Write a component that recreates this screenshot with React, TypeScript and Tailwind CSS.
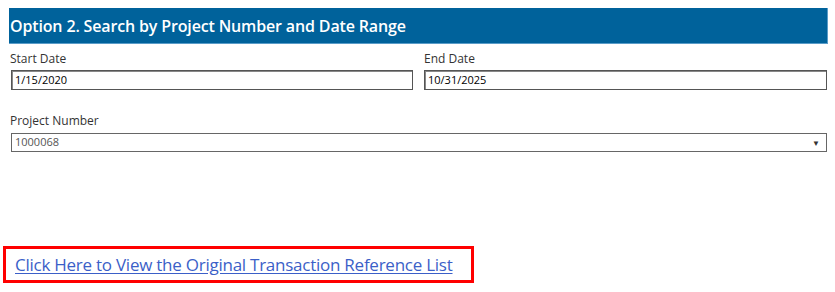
import React from "react";

export default function App() {
  const font = { fontFamily: '"Open Sans", "Noto Sans", Arial, sans-serif' };
  return (
    <div className="w-[835px] h-[292px] bg-white relative overflow-hidden" style={font}>
      <div className="pt-[8px] pl-[9px] pr-[7px]">
        <div className="h-[36px] bg-[#00629b] border-r border-b border-[#5a9cc8] flex items-center pl-[1px]">
          <span className="text-white text-[16px] font-semibold tracking-[-0.15px]">
            Option 2. Search by Project Number and Date Range
          </span>
        </div>
      </div>
      <div className="flex gap-[11px] pl-[10px] pr-[8px] mt-[7px]">
        <div className="flex-1 flex flex-col">
          <span className="text-[12px] text-[#333] leading-[16px]">Start Date</span>
          <div className="mt-[3px] ml-[1px] h-[20px] border border-[#555] shadow-[inset_1px_1px_0_#888] flex items-center pl-[3px] text-[11px] text-black">
            1/15/2020
          </div>
        </div>
        <div className="flex-1 flex flex-col">
          <span className="text-[12px] text-[#333] leading-[16px]">End Date</span>
          <div className="mt-[3px] h-[20px] border border-[#555] shadow-[inset_1px_1px_0_#888] flex items-center pl-[3px] text-[11px] text-black">
            10/31/2025
          </div>
        </div>
      </div>
      <div className="pl-[10px] pr-[8px] mt-[23px] flex flex-col">
        <span className="text-[12px] text-[#333] leading-[16px]">Project Number</span>
        <div className="mt-[4px] ml-[1px] h-[19px] border border-[#666] flex items-center justify-between pl-[3px] pr-[6px] text-[11px] text-[#555]">
          <span>1000068</span>
          <span className="text-[8px] text-[#333]">▼</span>
        </div>
      </div>
      <div className="absolute left-[3px] top-[246px] w-[471px] h-[37px] border-[3px] border-[#ff0000] flex items-center pl-[9px]">
        <span className="text-[17px] text-[#3b5fc8] underline underline-offset-2 tracking-[-0.25px]">
          Click Here to View the Original Transaction Reference List
        </span>
      </div>
    </div>
  );
}
